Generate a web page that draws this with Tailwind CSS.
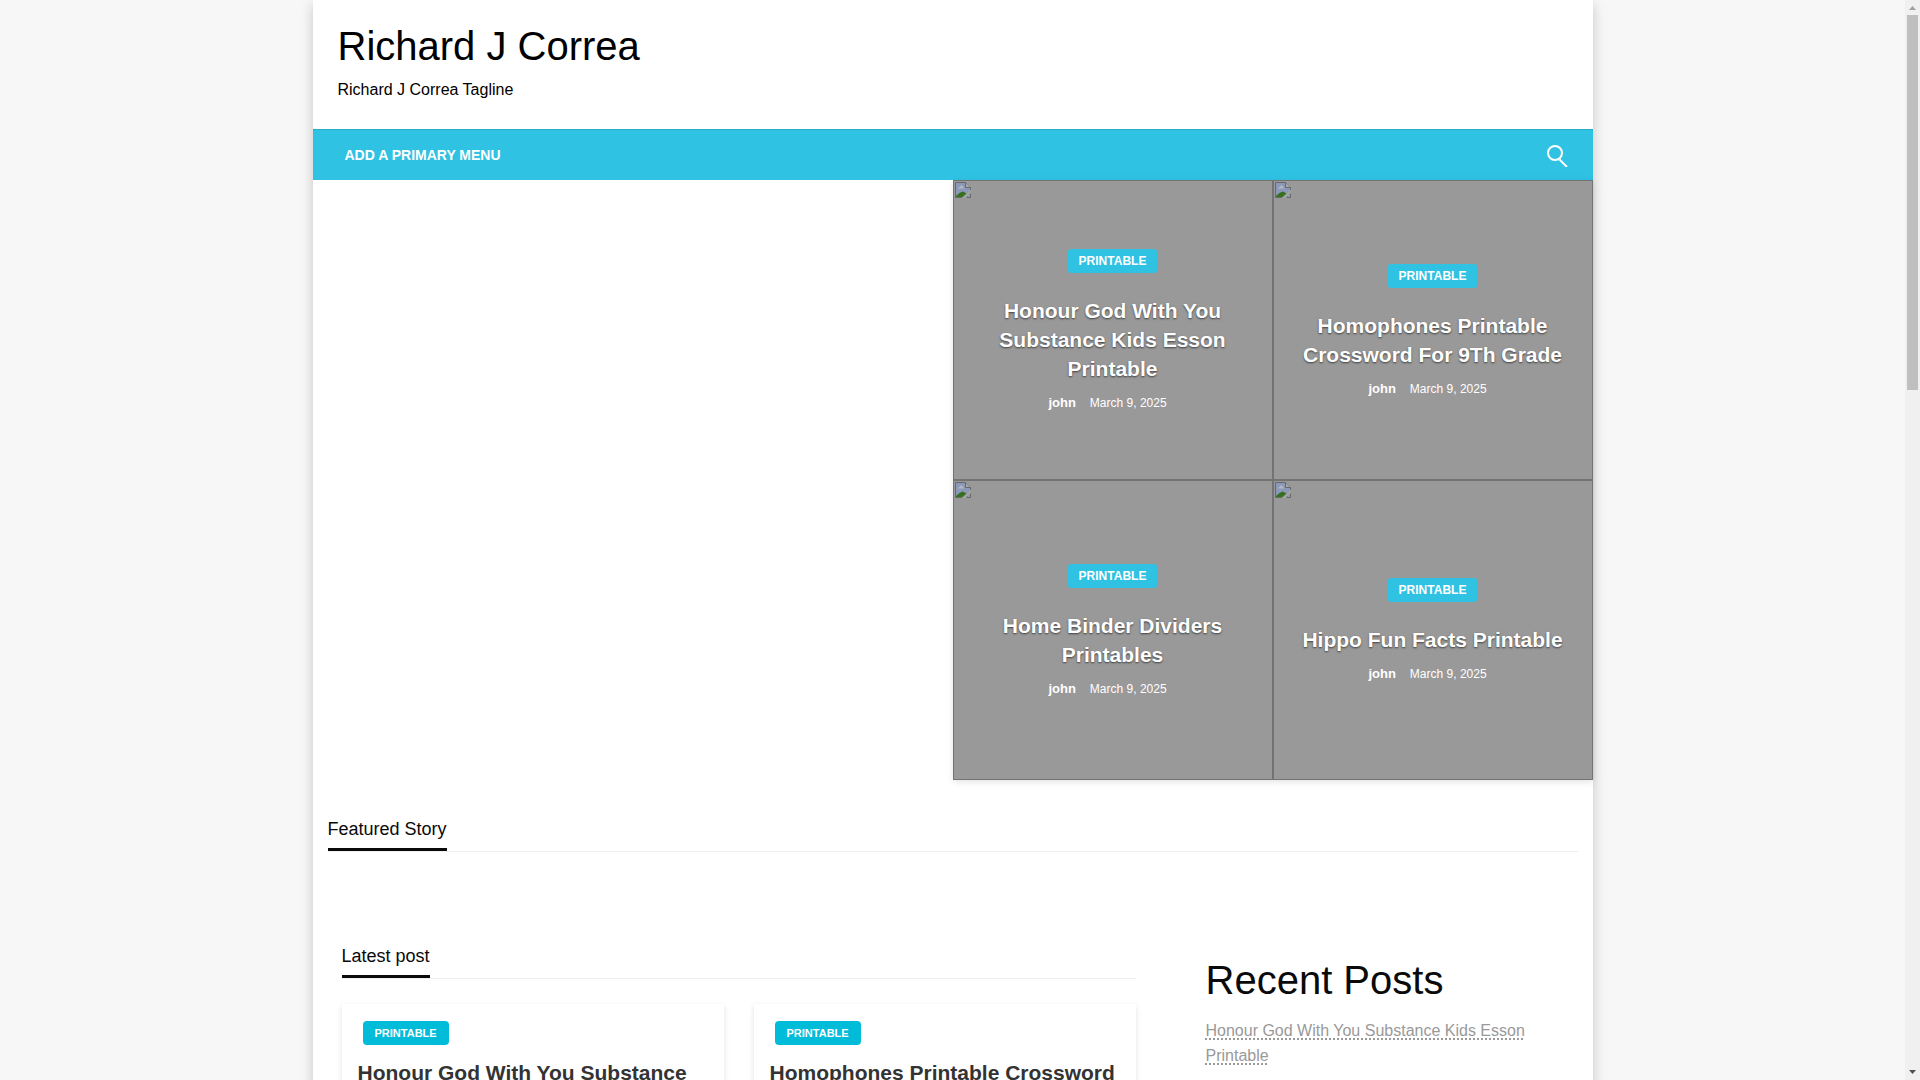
<!DOCTYPE html>
<html lang="en">
<head>
    <meta charset="UTF-8">
    <meta name="viewport" content="width=device-width, initial-scale=1.0">
    <title>Richard J Correa</title>
    <!-- Tailwind CSS CDN -->
    <script src="https://cdn.jsdelivr.net/npm/@tailwindcss/browser@4"></script>
</head>
<body class="flex h-screen overflow-hidden bg-[#f7f7f7] font-['Liberation_Sans',Arial,sans-serif] text-[#0a0a0a]">

    <!-- Broken image symbol, shared by all slider tiles -->
    <svg class="hidden">
        <symbol id="noImage" viewBox="0 0 16 16">
            <path d="M1 1H10L15 6V15H1Z" fill="#8b98b8"/>
            <path d="M3 6.500Q3 5 4.500 5Q5 3 7 3.500Q8 4 8 5Q9 5.200 9 6.500Z" fill="#b4b8c2"/>
            <path d="M1 15V14Q4 10.500 7.500 9.500Q10 10 12 12L13 15Z" fill="#37701f"/>
            <path d="M10 0V6H16V0Z" fill="#999"/>
            <path d="M0.500 15.500V0.500H10.500L15.500 5.500V15.500Z" fill="none" stroke="#686868"/>
            <path d="M10.500 0.500V5.500H15.500" fill="#a8a8a8" stroke="#686868"/>
            <path d="M6.500 16L16 7.500V11L11 16Z" fill="#a3a3a3"/>
        </symbol>
    </svg>

    <div class="min-w-0 flex-1">
        <div class="mx-auto min-h-full w-full max-w-[1280px] bg-white shadow-[0_5px_11px_0_rgba(0,0,0,0.1),0_4px_15px_0_rgba(0,0,0,0.1)]">

            <header class="px-[25px] pt-[22px] pb-[27px] text-black">
                <h1 class="text-[40px] leading-[48px]"><a href="#">Richard J Correa</a></h1>
                <p class="mt-[7px] text-base leading-[25px]">Richard J Correa Tagline</p>
            </header>

            <nav class="flex items-center justify-between border-t border-[#2aabc9] bg-[#2fc2e3] pr-[24px] pl-8 text-white">
                <a href="#" class="text-sm leading-[50px] font-bold">ADD A PRIMARY MENU</a>
                <button type="button" aria-label="Search" class="flex h-[50px] items-center">
                    <svg class="h-6 w-6" viewBox="0 0 24 24" fill="none" stroke="currentColor" stroke-width="2">
                        <circle cx="10" cy="10" r="7"/>
                        <path d="M14.500 16.500L22 24"/>
                    </svg>
                </button>
            </nav>

            <!-- Slider area: left half is empty, four posts on the right -->
            <section class="grid grid-cols-2">
                <div></div>
                <div class="grid auto-rows-[300px] grid-cols-2 text-center text-white shadow-[0_2px_5px_0_rgba(0,0,0,0.06),0_2px_10px_0_rgba(0,0,0,0.06)]">
                    <article class="relative flex flex-col items-center justify-center border border-[#737373] bg-[#999] px-6">
                        <svg class="absolute top-px left-px h-4 w-4"><use href="#noImage"/></svg>
                        <a href="#" class="rounded-[3px] bg-[#2fc2e3] px-[11px] text-xs leading-6 font-bold">PRINTABLE</a>
                        <h2 class="mt-[23px] text-[21px] leading-[29px] font-bold text-shadow-[0_1px_2px_rgba(0,0,0,0.6)]"><a href="#">Honour God With You Substance Kids Esson Printable</a></h2>
                        <p class="mt-3 flex gap-[14px] pr-[10px] leading-4"><a href="#" class="text-[13px] font-bold">john</a><a href="#" class="text-xs leading-4">March 9, 2025</a></p>
                    </article>
                    <article class="relative flex flex-col items-center justify-center border border-[#737373] bg-[#999] px-6">
                        <svg class="absolute top-px left-px h-4 w-4"><use href="#noImage"/></svg>
                        <a href="#" class="rounded-[3px] bg-[#2fc2e3] px-[11px] text-xs leading-6 font-bold">PRINTABLE</a>
                        <h2 class="mt-[23px] text-[21px] leading-[29px] font-bold text-shadow-[0_1px_2px_rgba(0,0,0,0.6)]"><a href="#">Homophones Printable Crossword For 9Th Grade</a></h2>
                        <p class="mt-3 flex gap-[14px] pr-[10px] leading-4"><a href="#" class="text-[13px] font-bold">john</a><a href="#" class="text-xs leading-4">March 9, 2025</a></p>
                    </article>
                    <article class="relative flex flex-col items-center justify-center border border-[#737373] bg-[#999] px-6">
                        <svg class="absolute top-px left-px h-4 w-4"><use href="#noImage"/></svg>
                        <a href="#" class="rounded-[3px] bg-[#2fc2e3] px-[11px] text-xs leading-6 font-bold">PRINTABLE</a>
                        <h2 class="mt-[23px] text-[21px] leading-[29px] font-bold text-shadow-[0_1px_2px_rgba(0,0,0,0.6)]"><a href="#">Home Binder Dividers Printables</a></h2>
                        <p class="mt-3 flex gap-[14px] pr-[10px] leading-4"><a href="#" class="text-[13px] font-bold">john</a><a href="#" class="text-xs leading-4">March 9, 2025</a></p>
                    </article>
                    <article class="relative flex flex-col items-center justify-center border border-[#737373] bg-[#999] px-6">
                        <svg class="absolute top-px left-px h-4 w-4"><use href="#noImage"/></svg>
                        <a href="#" class="rounded-[3px] bg-[#2fc2e3] px-[11px] text-xs leading-6 font-bold">PRINTABLE</a>
                        <h2 class="mt-[23px] text-[21px] leading-[29px] font-bold text-shadow-[0_1px_2px_rgba(0,0,0,0.6)]"><a href="#">Hippo Fun Facts Printable</a></h2>
                        <p class="mt-3 flex gap-[14px] pr-[10px] leading-4"><a href="#" class="text-[13px] font-bold">john</a><a href="#" class="text-xs leading-4">March 9, 2025</a></p>
                    </article>
                </div>
            </section>

            <section class="px-[15px] pt-[30px]">
                <div class="flex border-b border-[#eee]">
                    <h2 class="border-b-[3px] border-[#0a0a0a] pt-[5px] pb-[5px] text-lg leading-7">Featured Story</h2>
                </div>
            </section>

            <div class="flex px-[29px] pt-[85px]">
                <main class="min-w-0 flex-1">
                    <div class="flex border-b border-[#eee]">
                        <h2 class="border-b-[3px] border-[#0a0a0a] pt-[5px] pb-[5px] text-lg leading-7">Latest post</h2>
                    </div>
                    <div class="mt-[25px] grid grid-cols-2 gap-[30px]">
                        <article class="px-4 pt-4 pb-8 shadow-[0_2px_5px_0_rgba(0,0,0,0.08),0_2px_10px_0_rgba(0,0,0,0.04)]">
                            <a href="#" class="ml-[5px] inline-block rounded-[4px] bg-[#00bcd9] px-3 text-[11px] leading-6 font-bold text-white">PRINTABLE</a>
                            <h3 class="mt-[13px] text-[21px] leading-[29px] font-bold text-[#333]"><a href="#">Honour God With You Substance Kids Esson Printable</a></h3>
                        </article>
                        <article class="px-4 pt-4 pb-8 shadow-[0_2px_5px_0_rgba(0,0,0,0.08),0_2px_10px_0_rgba(0,0,0,0.04)]">
                            <a href="#" class="ml-[5px] inline-block rounded-[4px] bg-[#00bcd9] px-3 text-[11px] leading-6 font-bold text-white">PRINTABLE</a>
                            <h3 class="mt-[13px] text-[21px] leading-[29px] font-bold text-[#333]"><a href="#">Homophones Printable Crossword For 9Th Grade</a></h3>
                        </article>
                    </div>
                </main>

                <aside class="ml-[70px] w-[358px] pt-[15px]">
                    <h2 class="text-[40px] leading-[56px]">Recent Posts</h2>
                    <ul class="mt-[10px] text-base leading-[25px] text-[#999]">
                        <li><a href="#" class="underline decoration-dotted decoration-2 underline-offset-2 [text-decoration-skip-ink:none]">Honour God With You Substance Kids Esson Printable</a></li>
                    </ul>
                </aside>
            </div>
        </div>
    </div>

    <!-- Page scrollbar -->
    <div class="flex w-[15px] flex-col items-center bg-[#f0f0f0]">
        <svg class="h-[15px] w-[15px]" viewBox="0 0 15 15"><path d="M4 10L7.500 6L11 10Z" fill="#a0a0a0"/></svg>
        <div class="h-[375px] w-[11px] bg-[#bfbfbf]"></div>
        <svg class="mt-auto h-[15px] w-[15px]" viewBox="0 0 15 15"><path d="M4 5L7.500 9L11 5Z" fill="#505050"/></svg>
    </div>
</body>
</html>
